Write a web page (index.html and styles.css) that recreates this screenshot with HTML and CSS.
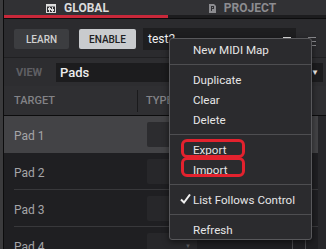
FILE: index.html
```html
<!DOCTYPE html>
<html lang="en">

<head>
    <meta charset="UTF-8">
    <meta name="viewport" content="width=device-width, initial-scale=1.0">
    <title>MIDI Learn</title>
    <link rel="stylesheet" href="styles.css">
</head>

<body>
    <div class="app">
        <!-- tab strip -->
        <div class="tabs">
            <div class="tab tab-global">
                <svg class="tab-icon" width="10" height="9" viewBox="0 0 10 9">
                    <rect x="0.5" y="0.5" width="9" height="8" fill="none" stroke="currentColor" />
                    <rect x="0.5" y="0.5" width="9" height="2" fill="currentColor" />
                    <path d="M3.5 3v6M6.5 3v6" stroke="currentColor" />
                    <rect x="2" y="4" width="3" height="2" fill="currentColor" />
                    <rect x="5" y="5" width="3" height="2" fill="currentColor" />
                </svg>
                <span>GLOBAL</span>
            </div>
            <div class="tab tab-project">
                <svg class="tab-icon" width="7" height="9" viewBox="0 0 7 9">
                    <path d="M0 0h5l2 2v7H0z" fill="currentColor" />
                    <path d="M2 2h3v3H3v2H2z" fill="#313134" />
                    <rect x="3" y="3" width="1" height="1" fill="currentColor" />
                </svg>
                <span>PROJECT</span>
            </div>
        </div>

        <!-- learn / enable / map name -->
        <div class="controls">
            <button class="btn">LEARN</button>
            <button class="btn btn-on">ENABLE</button>
            <div class="name-field">
                <span>test2</span>
                <svg class="field-icon" width="8" height="10" viewBox="0 0 8 10">
                    <path d="M0 1h8" stroke="#e8e8e8" stroke-width="2" />
                    <path d="M0 5h8M0 8h8" stroke="#e8e8e8" />
                </svg>
            </div>
            <svg class="list-icon" width="8" height="10" viewBox="0 0 8 10">
                <path d="M0 0.5h8M0 4.5h8M0 8.5h8" stroke="#8a8a8e" />
            </svg>
        </div>

        <!-- view selector -->
        <div class="view-row">
            <span class="view-label">VIEW</span>
            <div class="select">
                <span>Pads</span>
                <span class="caret">&#9660;</span>
            </div>
        </div>

        <!-- table -->
        <div class="table-head">
            <div class="col-target">TARGET</div>
            <div class="col-type">TYPE</div>
        </div>
        <div class="table-body">
            <div class="rows">
                <div class="row selected">
                    <div class="cell-name">Pad 1</div>
                    <div class="type-box"><span class="mini-caret">&#9660;</span></div>
                    <div class="spacer"></div>
                    <div class="small-box"></div>
                </div>
                <div class="row">
                    <div class="cell-name">Pad 2</div>
                    <div class="type-box"><span class="mini-caret">&#9660;</span></div>
                    <div class="spacer"></div>
                    <div class="small-box"></div>
                </div>
                <div class="row">
                    <div class="cell-name">Pad 3</div>
                    <div class="type-box"><span class="mini-caret">&#9660;</span></div>
                    <div class="spacer"></div>
                    <div class="small-box"></div>
                </div>
                <div class="row">
                    <div class="cell-name">Pad 4</div>
                    <div class="type-box"><span class="mini-caret">&#9660;</span></div>
                    <div class="spacer"></div>
                    <div class="small-box"></div>
                </div>
            </div>
            <div class="scroll"></div>
        </div>

        <!-- context menu -->
        <div class="menu">
            <div class="item">New MIDI Map</div>
            <div class="sep"></div>
            <div class="item">Duplicate</div>
            <div class="item">Clear</div>
            <div class="item">Delete</div>
            <div class="sep"></div>
            <div class="item mark mark-export">Export</div>
            <div class="item mark mark-import">Import</div>
            <div class="sep"></div>
            <div class="item">
                <svg class="check" width="11" height="10" viewBox="0 0 11 10">
                    <path d="M1 5.5l3 3 6-8" fill="none" stroke="#f0f0f0" stroke-width="2" />
                </svg>
                List Follows Control
            </div>
            <div class="sep"></div>
            <div class="item">Refresh</div>
        </div>
    </div>
</body>

</html>
```

FILE: styles.css
```css
html,
body {
    margin: 0;
    padding: 0;
}

body {
    background-color: #3b3b3d;
    font-family: Roboto, 'Liberation Sans', sans-serif;
    overflow: hidden;
}

.app {
    position: relative;
    margin-left: 3px;
    border-left: 1px solid #0c0c0d;
    height: 249px;
    background-color: #1f1f22;
    overflow: hidden;
}

/* tabs */
.tabs {
    display: flex;
    border-bottom: 1px solid #0d0d0e;
    background-color: #313134;
}

.tab {
    display: flex;
    align-items: center;
    justify-content: center;
    gap: 8px;
    box-sizing: border-box;
    height: 18px;
    padding-top: 1px;
    border-bottom: 3px solid #1c1c1e;
    font-size: 12px;
    font-weight: bold;
}

.tab-global {
    width: 164px;
    padding-right: 17px;
    border-bottom-color: #c8283a;
    color: #dcdcdc;
}

.tab-project {
    flex: 1;
    padding-right: 9px;
    color: #8c8c90;
}

.tab-icon {
    display: block;
}

/* controls */
.controls {
    display: flex;
    align-items: center;
    height: 38px;
    padding: 10px 0 8px 10px;
    box-sizing: border-box;
    background-color: #2b2b2e;
}

.btn {
    height: 20px;
    border: none;
    border-radius: 2px;
    padding: 0;
    font-family: inherit;
    font-size: 10px;
    font-weight: 500;
    background-color: #3c3d40;
    color: #d0d0d0;
    width: 55px;
}

.btn-on {
    width: 57px;
    margin-left: 10px;
    background-color: #c9cbce;
    color: #202022;
}

.name-field {
    display: flex;
    align-items: center;
    justify-content: space-between;
    margin-left: 7px;
    width: 153px;
    height: 22px;
    padding: 0 5px 0 5px;
    box-sizing: border-box;
    background-color: #1e1e20;
    color: #f0f0f0;
    font-size: 12px;
}

.field-icon {
    margin-top: 6px;
}

.list-icon {
    margin-left: 12px;
    margin-top: 5px;
}

/* view row */
.view-row {
    display: flex;
    align-items: center;
    height: 29px;
    padding: 5px 3px 4px 12px;
    box-sizing: border-box;
    border-top: 1px solid #202022;
    background-color: #2d2d30;
}

.view-label {
    width: 40px;
    font-size: 11px;
    font-weight: bold;
    color: #5f5f63;
}

.select {
    flex: 1;
    display: flex;
    align-items: center;
    justify-content: space-between;
    height: 19px;
    padding: 0 4px;
    background-color: #1c1c1e;
    color: #ececec;
    font-size: 13px;
    font-weight: 500;
}

.caret {
    font-size: 8px;
    color: #f0f0f0;
}

/* table */
.table-head {
    display: flex;
    align-items: center;
    height: 30px;
    box-sizing: border-box;
    border-bottom: 1px solid #0c0c0d;
    background-color: #2f2f32;
    font-size: 11px;
    font-weight: 500;
    color: #838387;
}

.col-target {
    width: 133px;
    padding-left: 10px;
    box-sizing: border-box;
}

.col-type {
    height: 22px;
    line-height: 22px;
    padding-left: 8px;
    border-left: 1px solid #1a1a1c;
}

.table-body {
    display: flex;
}

.rows {
    flex: 1;
}

.scroll {
    width: 8px;
    background-color: #27272a;
}

.row {
    display: flex;
    align-items: center;
    height: 37px;
    background: linear-gradient(#38383b, #38383b) no-repeat 10px 100% / calc(100% - 10px) 1px;
}

.row.selected {
    background: #434346;
}

.cell-name {
    width: 143px;
    padding-left: 10px;
    padding-top: 2px;
    box-sizing: border-box;
    font-size: 12px;
    color: #a5a5a8;
}

.type-box {
    display: flex;
    align-items: center;
    justify-content: flex-end;
    width: 50px;
    height: 25px;
    margin-top: -1px;
    padding-right: 6px;
    box-sizing: border-box;
    border-radius: 2px;
    background-color: #27272a;
}

.selected .type-box {
    background-color: #2c2c2f;
}

.mini-caret {
    font-size: 6px;
    color: #5a5a5e;
}

.spacer {
    flex: 1;
}

.small-box {
    width: 14px;
    height: 25px;
    margin-right: 12px;
    box-sizing: border-box;
    border-left: 1px solid #4a4a4d;
    border-right: 1px solid #4a4a4d;
}

/* context menu */
.menu {
    position: absolute;
    left: 165px;
    top: 38px;
    width: 143px;
    box-sizing: border-box;
    border: 1px solid #58585b;
    border-radius: 3px;
    background-color: #2b2b2e;
    box-shadow: 0 2px 6px rgba(0, 0, 0, 0.55);
    z-index: 5;
}

.item {
    position: relative;
    display: flex;
    align-items: center;
    height: 20px;
    padding-left: 23px;
    padding-top: 1px;
    box-sizing: border-box;
    font-size: 11.6px;
    color: #e6e6e6;
}

.sep {
    height: 1px;
    margin: 5px 0 4px;
    background-color: #4e4e51;
}

.check {
    position: absolute;
    left: 10px;
    top: 5px;
}

.mark::before {
    content: "";
    position: absolute;
    left: 11px;
    width: 64px;
    box-sizing: border-box;
    border: 3px solid #e3222e;
    border-radius: 6px;
}

.mark-export::before {
    top: 0;
    height: 19px;
}

.mark-import::before {
    top: -2px;
    height: 20px;
}
```
